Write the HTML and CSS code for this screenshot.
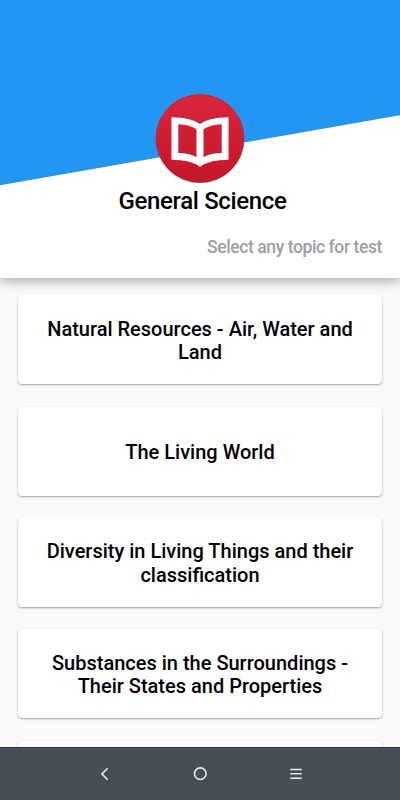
FILE: index.html
```
<!DOCTYPE html>
<html lang="en">
<head>
  <meta charset="UTF-8" />
  <meta name="viewport" content="width=device-width, initial-scale=1.0">
  <title>General Science</title>
  <link rel="stylesheet" href="styles.css">
</head>
<body>

  <header class="header">
    <svg class="logo" viewBox="0 0 90 90" aria-hidden="true">
      <defs>
        <linearGradient id="red" x1="0" y1="0" x2="0" y2="1">
          <stop offset="0" stop-color="#d9263a" />
          <stop offset="1" stop-color="#c4162a" />
        </linearGradient>
      </defs>
      <circle cx="45" cy="44.6" r="44" fill="url(#red)" stroke="#b9202f" stroke-width="0.8" />
      <!-- Open book -->
      <path fill="#fff" fill-rule="evenodd" d="M16.5 23.2Q36 23.2 45 30Q54 23.2 73.5 23.2V65.8Q54 66 45 72.8Q36 66 16.5 65.8ZM23.3 30.3V59Q34 59 41.5 63.2V35.3Q34 30.5 23.3 30.3ZM66.7 30.3V59Q56 59 48.5 63.2V35.3Q56 30.5 66.7 30.3Z" />
    </svg>
    <h1>General Science</h1>
    <p class="subtitle">Select any topic for test</p>
  </header>

  <!-- Topics -->
  <main class="topics">
    <div class="card">Natural Resources - Air, Water and Land</div>
    <div class="card">The Living World</div>
    <div class="card">Diversity in Living Things and their classification</div>
    <div class="card">Substances in the Surroundings - Their States and Properties</div>
    <div class="card"></div>
  </main>

  <!-- System navigation -->
  <nav class="navbar">
    <svg viewBox="0 0 16 16"><path d="M11.6 2.3L6 8L11.6 13.7" /></svg>
    <svg viewBox="0 0 16 16"><circle cx="8.3" cy="7.7" r="5.8" /></svg>
    <svg viewBox="0 0 16 16"><path d="M2.3 3.5H13.7M2.3 7.8H13.7M2.3 12.2H13.7" /></svg>
  </nav>

</body>
</html>
```
FILE: styles.css
```
* {
  box-sizing: border-box;
}

body {
  margin: 0;
  height: 100vh;
  display: flex;
  flex-direction: column;
  overflow: hidden;
  background-color: #fafafa;
  font-family: Roboto, sans-serif;
  font-weight: 500;
  color: #000;
}

.header {
  flex: none;
  height: 278px;
  padding: 94px 18px 0;
  display: flex;
  flex-direction: column;
  align-items: center;
  background: linear-gradient(170.07deg, #2196f3 0, #2196f3 182px, #fff 183px);
  box-shadow: 0 3px 12px rgba(0, 0, 0, 0.34);
  z-index: 1;
}

.logo {
  width: 90px;
  height: 90px;
}

h1 {
  margin: 2px 0 0 5px;
  font-size: 24px;
  line-height: 30px;
  font-weight: 500;
  letter-spacing: -0.35px;
}

.subtitle {
  align-self: flex-end;
  margin: 20px 0 0;
  font-size: 17.6px;
  line-height: 22px;
  letter-spacing: -0.45px;
  color: #9e9ea3;
}

.topics {
  flex: 1;
  min-height: 0;
  overflow: hidden;
  padding: 17.4px 18px 0;
  display: flex;
  flex-direction: column;
  gap: 22.3px;
}

.card {
  flex: none;
  height: 89px;
  padding: 3px 24px 0;
  display: flex;
  align-items: center;
  justify-content: center;
  text-align: center;
  font-size: 20px;
  line-height: 23.5px;
  background-color: #fff;
  border-radius: 4px;
  box-shadow: 0 1px 2px rgba(0, 0, 0, 0.36);
}

.navbar {
  flex: none;
  height: 53px;
  padding: 0 96px;
  display: flex;
  align-items: center;
  justify-content: space-between;
  background-color: #474f54;
  border-top: 1px solid #353c41;
  z-index: 2;
}

.navbar svg {
  width: 16px;
  height: 16px;
  fill: none;
  stroke: #e6edf3;
  stroke-width: 1.6;
}
```
